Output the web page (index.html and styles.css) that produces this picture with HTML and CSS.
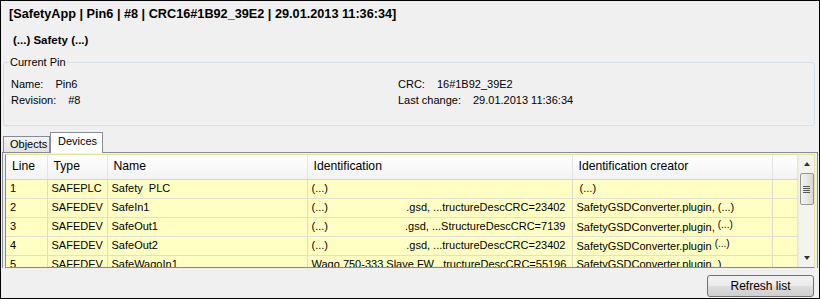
FILE: index.html
```html
<!DOCTYPE html>
<html>
<head>
<meta charset="utf-8">
<link rel="stylesheet" href="styles.css">
</head>
<body>
<div class="window">
  <div class="title">[SafetyApp | Pin6 | #8 | CRC16#1B92_39E2 | 29.01.2013 11:36:34]</div>
  <div class="sub">(...) Safety (...)</div>
  <fieldset class="group">
    <legend>Current Pin</legend>
    <div class="info">
      <div class="col">
        <div class="line"><span class="lbl">Name:</span><span>Pin6</span></div>
        <div class="line"><span class="lbl">Revision:</span><span>#8</span></div>
      </div>
      <div class="col right">
        <div class="line"><span class="lbl">CRC:</span><span class="crc">16#1B92_39E2</span></div>
        <div class="line"><span class="lbl">Last change:</span><span>29.01.2013 11:36:34</span></div>
      </div>
    </div>
  </fieldset>
  <div class="tabs">
    <div class="tab">Objects</div>
    <div class="tab active">Devices</div>
  </div>
  <div class="panel">
    <div class="grid">
      <table class="tbl">
        <colgroup>
          <col class="c1"><col class="c2"><col class="c3"><col class="c4"><col class="c5"><col class="c6">
        </colgroup>
        <thead>
          <tr><th>Line</th><th>Type</th><th>Name</th><th>Identification</th><th>Identification creator</th><th></th></tr>
        </thead>
        <tbody>
          <tr><td>1</td><td>SAFEPLC</td><td>Safety&nbsp; PLC</td><td>(...)</td><td>&nbsp;(...)</td><td></td></tr>
          <tr><td>2</td><td>SAFEDEV</td><td>SafeIn1</td><td><div class="idf"><span>(...)</span><span>.gsd, ...tructureDescCRC=23402</span></div></td><td>SafetyGSDConverter.plugin, (...)</td><td></td></tr>
          <tr><td>3</td><td>SAFEDEV</td><td>SafeOut1</td><td><div class="idf"><span>(...)</span><span>.gsd, ...StructureDescCRC=7139</span></div></td><td>SafetyGSDConverter.plugin, <sup>(...)</sup></td><td></td></tr>
          <tr><td>4</td><td>SAFEDEV</td><td>SafeOut2</td><td><div class="idf"><span>(...)</span><span>.gsd, ...tructureDescCRC=23402</span></div></td><td>SafetyGSDConverter.plugin <sup>(...)</sup></td><td></td></tr>
          <tr><td>5</td><td>SAFEDEV</td><td>SafeWagoIn1</td><td><div class="idf"><span>Wago 750-333 Slave FW</span><span>...tructureDescCRC=55196</span></div></td><td>SafetyGSDConverter.plugin, )</td><td></td></tr>
        </tbody>
      </table>
      <div class="scroll">
        <div class="arrow up"></div>
        <div class="track">
          <div class="thumb"><span class="grip"></span><span class="grip"></span><span class="grip"></span><span class="grip"></span></div>
        </div>
        <div class="arrow down"></div>
      </div>
    </div>
  </div>
  <div class="bottom">
    <button class="btn">Refresh list</button>
  </div>
</div>
</body>
</html>
```

FILE: styles.css
```css
* { box-sizing: border-box; }
html, body { margin: 0; padding: 0; }
body {
  font-family: "Liberation Sans", Arial, sans-serif;
  font-size: 11px;
  color: #000;
  background: #f0f0f0;
}
.window {
  width: 820px;
  height: 299px;
  border: 1px solid #000;
  background: #f0f0f0;
  display: flex;
  flex-direction: column;
  overflow: hidden;
}
.title {
  margin-top: 4px;
  height: 18px;
  line-height: 18px;
  padding-left: 8px;
  font-weight: bold;
  font-size: 12.7px;
}
.sub {
  margin-top: 8px;
  height: 18px;
  line-height: 18px;
  padding-left: 12px;
  font-weight: bold;
  font-size: 11.5px;
}
.group {
  margin: 6px 4px 0 2px;
  padding: 7px 8px 17px 7px;
  border: 1px solid #d5dfe5;
  border-radius: 3px;
  min-width: 0;
}
.group legend {
  padding: 0 1px;
  margin-left: -2px;
  line-height: 14px;
  font-size: 11px;
}
.info {
  display: flex;
}
.col { width: 387px; }
.col.right { flex: 1; }
.line {
  height: 16px;
  line-height: 16px;
  display: flex;
  gap: 12px;
}
.crc { margin-left: 0; }
.tabs {
  margin-top: 6px;
  margin-left: 2px;
  height: 20px;
  display: flex;
  align-items: flex-end;
  position: relative;
  z-index: 1;
}
.tab {
  height: 16px;
  line-height: 15px;
  padding: 0 6px;
  border: 1px solid #898c95;
  border-bottom: none;
  background: linear-gradient(#f3f3f3, #e3e3e3);
  width: 47px;
}
.tab.active {
  height: 21px;
  line-height: 17px;
  margin-bottom: -1px;
  background: #fff;
  width: 53px;
  margin-left: 0;
  padding-left: 7px;
}
.panel {
  margin: 0 1px 0 1px;
  border: 1px solid #898c95;
  border-bottom: none;
  padding: 1px 2px 0 2px;
  background: #f0f0f0;
}
.grid {
  height: 114px;
  border: 1px solid #e4e49a;
  border-left-color: #828790;
  border-bottom-color: #828790;
  display: flex;
  overflow: hidden;
  background: #fffff0;
}
.tbl {
  width: 791px;
  table-layout: fixed;
  border-collapse: collapse;
  flex: none;
}
.c1 { width: 41px; }
.c2 { width: 60px; }
.c3 { width: 200px; }
.c4 { width: 265px; }
.c5 { width: 200px; }
.c6 { width: 25px; }
.tbl th {
  height: 24px;
  text-align: left;
  font-weight: normal;
  padding: 0 6px 1px 6px;
  background: linear-gradient(#ffffff, #f7f7f7 60%, #f1f2f4);
  border-right: 1px solid #e3e4e6;
  border-bottom: 1px solid #d5d5d5;
  white-space: nowrap;
  overflow: hidden;
  font-size: 12.2px;
}
.tbl td {
  height: 19px;
  padding: 0 4px 1px 4px;
  background: #ffffc4;
  border-right: 1px solid #dcdcc8;
  border-bottom: 1px solid #e0e0d0;
  white-space: nowrap;
  overflow: hidden;
}
.tbl td:last-child, .tbl th:last-child { border-right: 1px solid #e3e4e6; }
.idf {
  display: flex;
  justify-content: space-between;
  padding-right: 2px;
}
sup {
  font-size: 10px;
  vertical-align: 3px;
}
.scroll {
  width: 17px;
  flex: none;
  display: flex;
  flex-direction: column;
  background: #f4f4ee;
  border-left: 1px solid #ececdf;
}
.arrow {
  height: 17px;
  display: flex;
  align-items: center;
  justify-content: center;
}
.arrow.up::after {
  content: "";
  border-left: 3.5px solid transparent;
  border-right: 3.5px solid transparent;
  border-bottom: 4px solid #333;
}
.arrow.down::after {
  content: "";
  border-left: 3.5px solid transparent;
  border-right: 3.5px solid transparent;
  border-top: 4px solid #333;
}
.arrow.down { margin-top: auto; height: 18px; }
.track {
  padding: 1px 1px 0 1px;
}
.thumb {
  height: 32px;
  border: 1px solid #979797;
  border-radius: 2px;
  background: linear-gradient(90deg, #f2f2f2, #e8e8e8 50%, #d6d6d6);
  display: flex;
  flex-direction: column;
  align-items: center;
  justify-content: center;
  gap: 1px;
}
.grip {
  width: 7px;
  height: 1px;
  background: #555;
}
.bottom {
  display: flex;
  justify-content: flex-end;
  padding: 7px 5px 0 0;
}
.btn {
  width: 107px;
  height: 22px;
  border: 1px solid #707070;
  border-radius: 3px;
  background: linear-gradient(#f2f2f2 0%, #ebebeb 49%, #dddddd 50%, #cfcfcf 100%);
  font-family: "Liberation Sans", Arial, sans-serif;
  font-size: 12px;
  color: #000;
  padding: 0;
}
```
